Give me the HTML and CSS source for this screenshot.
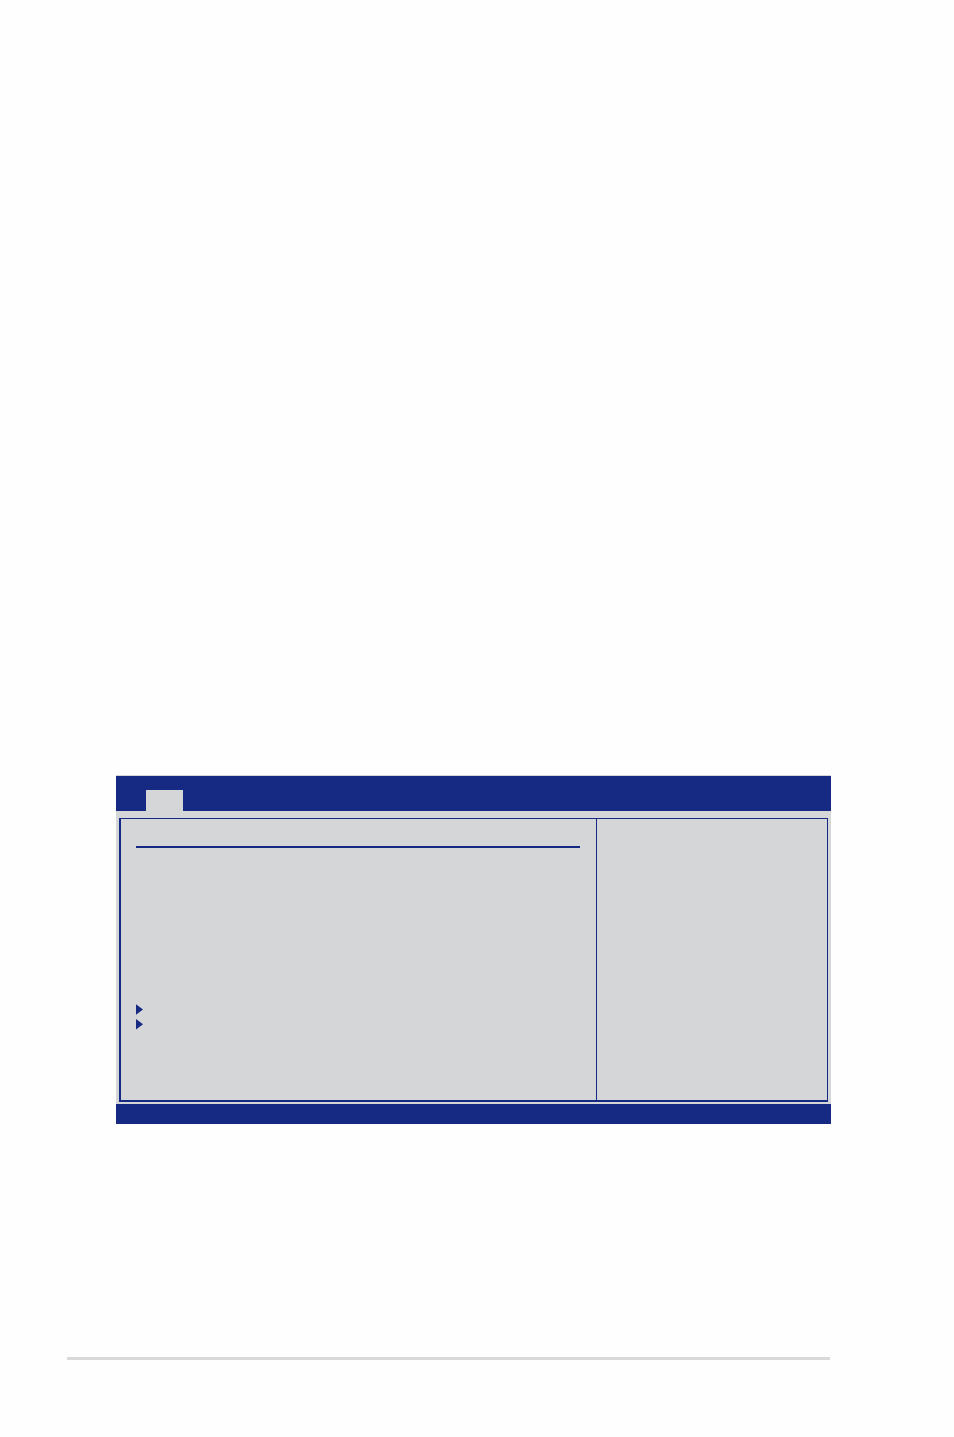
FILE: index.html
```
<!DOCTYPE html>
<html lang="en">
<head>
	<meta charset="utf-8">
	<title>Setup screen</title>
	<link rel="stylesheet" href="styles.css">
</head>
<body>
	<main class="screen">
		<header class="menu-bar">
			<div class="menu-tab"></div>
		</header>
		<div class="frame">
			<section class="settings">
				<hr class="settings-rule">
				<ul class="submenus">
					<li class="submenu">
						<svg width="7" height="11" viewBox="0 0 7 11"><path d="M0 0.3L7 5.5L0 10.7z"></path></svg>
					</li>
					<li class="submenu">
						<svg width="7" height="11" viewBox="0 0 7 11"><path d="M0 0L7 5.2L0 10.4z"></path></svg>
					</li>
				</ul>
			</section>
			<aside class="help"></aside>
		</div>
		<footer class="key-bar"></footer>
	</main>
	<hr class="page-rule">
</body>
</html>
```
FILE: styles.css
```
body {
	margin: 0;
	padding: 775px 123px 77px 116px;
	background: #fefefe;
	font-family: "Liberation Sans", Arial, sans-serif;
}
.screen {
	background: #d5d6d8;
	padding-top: 1px;
}
.menu-bar {
	display: flex;
	background: #162983;
	padding: 14px 30px 0;
}
.menu-tab {
	width: 37px;
	height: 21px;
	background: #d5d6d8;
}
.frame {
	display: grid;
	grid-template-columns: 475fr 231fr;
	margin: 7px 3px 2px;
	border: 1px solid #162983;
	border-left-width: 2px;
	border-bottom-width: 2px;
}
.settings {
	min-height: 238px;
	padding: 27px 16px 16px 15px;
}
.settings-rule {
	height: 2px;
	margin: 0;
	border: 0;
	background: #162983;
}
.submenus {
	display: flex;
	flex-direction: column;
	gap: 4px;
	margin: 156px 0 0;
	padding: 0;
	list-style: none;
}
.submenu {
	display: flex;
}
.submenu svg {
	fill: #162983;
}
.help {
	border-left: 1px solid #162983;
}
.key-bar {
	height: 20px;
	background: #162983;
}
.page-rule {
	height: 3px;
	margin: 233px 1px 0 -49px;
	border: 0;
	background: #d9d9d9;
}
```
